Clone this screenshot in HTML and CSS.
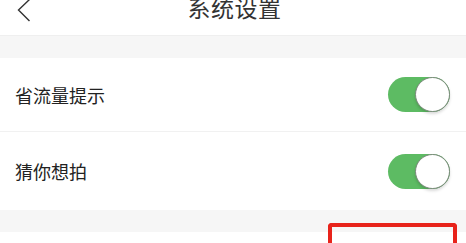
FILE: index.html
```html
<!DOCTYPE html>
<html lang="zh-CN">
<head>
    <meta charset="UTF-8">
    <meta name="viewport" content="width=device-width, initial-scale=1.0">
    <title>系统设置</title>
    <link rel="stylesheet" href="styles.css">
</head>
<body>
    <header class="top-bar">
        <span class="back">
            <svg width="14" height="24" viewBox="0 0 14 24">
                <path d="M12.5 0.5 L1.5 11 L12.5 22" fill="none" stroke="#333" stroke-width="1.4"/>
            </svg>
        </span>
        <h1 class="title">系统设置</h1>
    </header>
    <div class="gap"></div>
    <ul class="settings">
        <li class="row first">
            <span class="label">省流量提示</span>
            <span class="switch on"><span class="knob"></span></span>
        </li>
        <li class="row second">
            <span class="label">猜你想拍</span>
            <span class="switch on"><span class="knob"></span></span>
        </li>
    </ul>
    <div class="gap bottom"></div>
    <div class="highlight"></div>
</body>
</html>
```

FILE: styles.css
```css
body {
    font-family: "Noto Sans CJK SC", "Noto Sans", sans-serif;
    margin: 0;
    padding: 0;
    background-color: #fff;
    color: #222;
    overflow: hidden;
    position: relative;
    height: 243px;
}
.top-bar {
    height: 35px;
    border-bottom: 1px solid #efefef;
    display: flex;
    align-items: flex-start;
    justify-content: center;
    position: relative;
}
.back {
    position: absolute;
    left: 17px;
    top: -1px;
}
.title {
    margin: -4px 0 0 3px;
    font-size: 23px;
    line-height: 23px;
    font-weight: normal;
    color: #333;
    letter-spacing: 0.5px;
}
.gap {
    height: 22px;
    background-color: #f6f6f6;
}
.gap.bottom {
    height: 22px;
}
.settings {
    list-style: none;
    margin: 0;
    padding: 0;
}
.row {
    display: flex;
    align-items: center;
    justify-content: space-between;
    padding: 0 16px 0 15px;
}
.row.first {
    height: 73px;
    border-bottom: 1px solid #f1f1f1;
}
.row.second {
    height: 78px;
}
.label {
    font-size: 18px;
    color: #222;
}
.switch {
    width: 62px;
    height: 35px;
    border-radius: 18px;
    background-color: #5dbb63;
    display: flex;
    justify-content: flex-end;
}
.knob {
    width: 33px;
    height: 33px;
    border-radius: 50%;
    background-color: #fff;
    border: 1px solid #7a8a7a;
    box-shadow: 0 2px 3px rgba(0, 0, 0, 0.15);
}
.highlight {
    position: absolute;
    left: 328px;
    top: 223px;
    width: 121px;
    height: 16px;
    border: 4px solid #e8231b;
    border-bottom: 0;
    border-radius: 4px 4px 0 0;
}
```
